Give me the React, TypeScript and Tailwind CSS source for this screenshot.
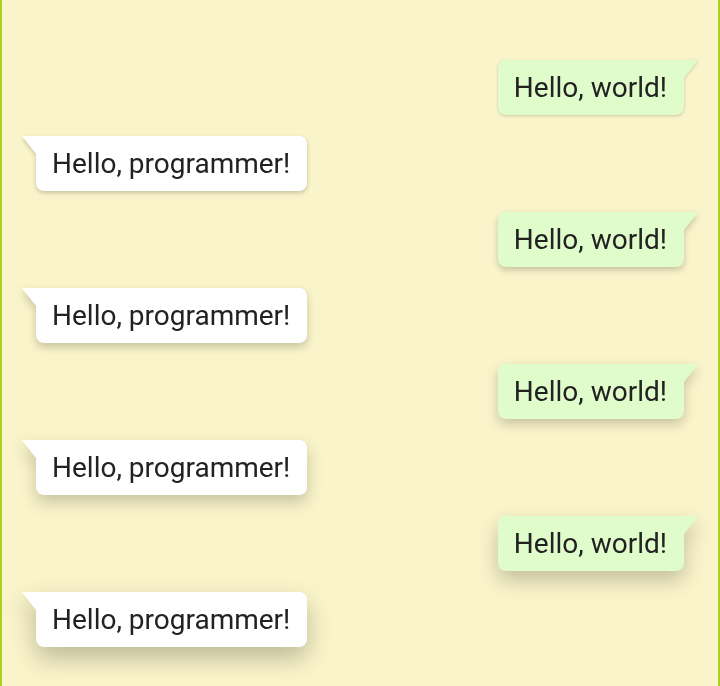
const shadows = [
  "drop-shadow-[0_1px_1.5px_rgba(0,0,0,0.18)]",
  "drop-shadow-[0_2px_2px_rgba(0,0,0,0.2)]",
  "drop-shadow-[0_3px_3px_rgba(0,0,0,0.2)]",
  "drop-shadow-[0_4px_4px_rgba(0,0,0,0.2)]",
  "drop-shadow-[0_5px_6px_rgba(0,0,0,0.2)]",
  "drop-shadow-[0_7px_8px_rgba(0,0,0,0.2)]",
  "drop-shadow-[0_9px_10px_rgba(0,0,0,0.22)]",
  "drop-shadow-[0_11px_12px_rgba(0,0,0,0.24)]",
];

function Bubble({ text, mine, shadow }: { text: string; mine: boolean; shadow: string }) {
  return (
    <div className={`flex ${mine ? "flex-row justify-end" : "flex-row-reverse justify-end"} ${shadow}`}>
      <div
        className={`h-[55px] pl-4 pr-[17px] flex items-center text-[28px] leading-none text-[#222] ${
          mine ? "bg-[#e1fccb] rounded-l-lg rounded-br-lg" : "bg-white rounded-r-lg rounded-bl-lg"
        }`}
      >
        {text}
      </div>
      <svg width="14" height="18" viewBox="0 0 14 18" className="block">
        {mine ? (
          <polygon points="0,0 14,0 0,18" fill="#e1fccb" />
        ) : (
          <polygon points="0,0 14,0 14,18" fill="#ffffff" />
        )}
      </svg>
    </div>
  );
}

export default function App() {
  const rows = Array.from({ length: 8 }, (_, i) => i);
  return (
    <div
      className="h-[686px] overflow-hidden bg-[#f9f4c9] border-x-2 border-[#a6d51e] px-5 pt-[60px] flex flex-col gap-[21px]"
      style={{ fontFamily: "Roboto, 'Noto Sans', sans-serif" }}
    >
      {rows.map((i) => (
        <Bubble
          key={i}
          mine={i % 2 === 0}
          text={i % 2 === 0 ? "Hello, world!" : "Hello, programmer!"}
          shadow={shadows[i]}
        />
      ))}
    </div>
  );
}
